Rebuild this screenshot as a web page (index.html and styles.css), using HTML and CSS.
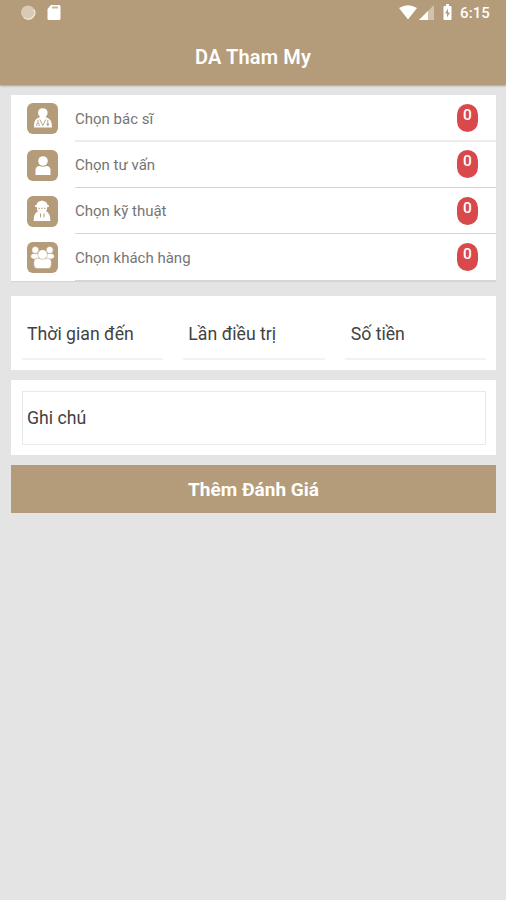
FILE: index.html
```html
<!DOCTYPE html>
<html lang="vi">
<head>
<meta charset="utf-8">
<title>DA Tham My</title>
<link rel="stylesheet" href="styles.css">
</head>
<body>
<header class="header">
  <div class="status">
    <svg class="status-left" width="44" height="18" viewBox="0 0 44 18">
      <circle cx="8" cy="8.500" r="7" fill="#d9cab4"/>
      <path d="M4 13.500a6.500 6.500 0 0 0 10-8" fill="none" stroke="#f3e6cf" stroke-width="1.500"/>
      <path d="M31 1h8q1.500 0 1.500 1.500v12q0 1.500-1.500 1.500h-10q-1.500 0-1.500-1.500V5z" fill="#fff"/>
      <path d="M32 3.500h6" stroke="#c9b698" stroke-width="2"/>
    </svg>
    <svg class="status-right" width="56" height="18" viewBox="0 0 56 18">
      <path d="M3 4Q12-1.500 21 4L12 15.500z" fill="#fff"/>
      <path d="M23 16L38 1v15z" fill="#d3c2a9"/>
      <path d="M23 16l9-9v9z" fill="#fff"/>
      <path d="M50 0h3v2h1.500q1 0 1 1v12q0 1-1 1h-6q-1 0-1-1V3q0-1 1-1H50z" fill="#fff"/>
      <path d="M52 4.500l-3 5h2v4l3-5h-2z" fill="#b49b79"/>
    </svg>
    <span class="clock">6:15</span>
  </div>
  <h1 class="title">DA Tham My</h1>
</header>
<main class="content">
  <section class="card list">
    <div class="row">
      <svg class="icon" viewBox="0 0 31 31">
        <path d="M7 24.500q-.3-7.500 3-9l3-1.500q-2-1.800-2-4 0-4.800 4.800-4.800t4.800 4.800q0 2.200-2 4l3 1.500q3.300 1.500 3.400 9z" fill="#fff"/>
        <path d="M12.800 16.500l3 6 3-6M11 17v3M9.800 23v-1.500q0-1.200 1.200-1.200t1.200 1.200V23M20.800 17v3.500" fill="none" stroke="#b49b79" stroke-width=".9"/>
        <circle cx="20.800" cy="21.500" r="1.200" fill="#b49b79"/>
      </svg>
      <div class="row-body"><span>Chọn bác sĩ</span><b class="badge">0</b></div>
    </div>
    <div class="row">
      <svg class="icon" viewBox="0 0 31 31">
        <circle cx="16" cy="11" r="4.800" fill="#fff"/>
        <path d="M8.500 25v-4.500q0-4.500 4-4.500 3.500 1.500 7 0 4 0 4 4.500V25z" fill="#fff"/>
      </svg>
      <div class="row-body"><span>Chọn tư vấn</span><b class="badge">0</b></div>
    </div>
    <div class="row">
      <svg class="icon" viewBox="0 0 31 31">
        <path d="M9.500 9q.5-3.500 4.300-4 1.200-.8 2.400 0 3.800.5 4.300 4h1.300v2h-1.600q0 3-1.200 4.200 4.400 1.800 4.400 9.800H6.600q0-8 4.400-9.800-1.200-1.200-1.200-4.200H8.200V9z" fill="#fff"/>
        <path d="M11.500 12.300h1.500M14.300 12.300h1.500M17 12.300h1.500M13.500 17.500v3.800M17 17.500v3.800" fill="none" stroke="#b49b79" stroke-width="1"/>
      </svg>
      <div class="row-body"><span>Chọn kỹ thuật</span><b class="badge">0</b></div>
    </div>
    <div class="row">
      <svg class="icon" viewBox="0 0 31 31">
        <g fill="#fff" stroke="#b49b79" stroke-width=".5">
          <circle cx="8.300" cy="8" r="3.500"/><circle cx="22.700" cy="8" r="3.500"/>
          <path d="M3.800 15.500q-.5-4 3.200-4h5v5.500H6zM27.200 15.500q.5-4-3.200-4h-5v5.500h6z"/>
          <path d="M6.800 23v-3q0-3.500 3.500-3.700h10.500q3.500.2 3.500 3.700v3q-.5 3.500-3 3.500H10q-2.700 0-3.200-3.500z"/>
          <circle cx="15.600" cy="12.500" r="4.800"/>
        </g>
      </svg>
      <div class="row-body"><span>Chọn khách hàng</span><b class="badge">0</b></div>
    </div>
  </section>
  <section class="card fields">
    <div class="field">Thời gian đến</div>
    <div class="field">Lần điều trị</div>
    <div class="field">Số tiền</div>
  </section>
  <section class="card notes">
    <div class="note">Ghi chú</div>
  </section>
  <button class="submit">Thêm Đánh Giá</button>
</main>
</body>
</html>
```
FILE: styles.css
```css
* { box-sizing: border-box; }
body {
  margin: 0;
  min-height: 900px;
  background: #e4e4e4;
  font-family: Roboto, "Liberation Sans", sans-serif;
}
.header {
  height: 85px;
  background: #b49b79;
  color: #fff;
  box-shadow: 0 1px 2px rgba(0, 0, 0, .3);
}
.status {
  display: flex;
  align-items: center;
  height: 28px;
  padding: 0 16px 2px 20px;
}
.status-right { margin-left: auto; }
.clock {
  margin-left: 8px;
  font-size: 15px;
  font-weight: 500;
  letter-spacing: .1px;
}
.title {
  margin: 0;
  font-size: 20px;
  line-height: 58px;
  font-weight: 600;
  letter-spacing: .15px;
  text-align: center;
}
.content {
  display: flex;
  flex-direction: column;
  gap: 10px;
  padding: 10.400px 10px 0 11px;
}
.card { background: #fff; }
.list {
  margin-bottom: 5.500px;
  box-shadow: 0 1px 1px rgba(0, 0, 0, .06);
}
.row {
  display: flex;
  height: 46.350px;
  padding-left: 16px;
}
.icon {
  width: 31px;
  height: 31px;
  margin-top: 8px;
  border-radius: 6px;
  background: #b49b79;
}
.row-body {
  display: flex;
  flex: 1;
  align-items: center;
  justify-content: space-between;
  margin-left: 17px;
  padding: 1px 18px 0 0;
  border-bottom: 1px solid #d6d6d6;
  color: #757575;
  font-size: 15px;
}
.row:first-child .row-body {
  padding-top: 2px;
  border-bottom: 2px solid #ececec;
}
.badge {
  width: 21px;
  height: 28px;
  margin-top: -1px;
  border-radius: 10.500px;
  background: #d9484a;
  color: #fff;
  font-size: 15.500px;
  font-weight: 500;
  line-height: 22px;
  text-align: center;
}
.fields {
  display: grid;
  grid-template-columns: repeat(3, 1fr);
  column-gap: 20px;
  height: 74px;
  padding: 13px 10px 10px 11px;
}
.field {
  height: 51px;
  padding-left: 5px;
  border-bottom: 2px solid #f2f2f2;
  color: #424242;
  font-size: 17.700px;
  line-height: 50px;
}
.field:last-child { padding-left: 6px; }
.notes {
  height: 75px;
  padding: 11px 10px 10px 11px;
}
.note {
  height: 54px;
  padding-left: 4px;
  border: 1px solid #e9e9e9;
  color: #424242;
  font-size: 17.700px;
  line-height: 53px;
}
.submit {
  height: 47.500px;
  padding: 1px 0 0;
  border: 0;
  background: #b49b79;
  color: #fff;
  font: 700 19px Roboto, "Liberation Sans", sans-serif;
}
```
